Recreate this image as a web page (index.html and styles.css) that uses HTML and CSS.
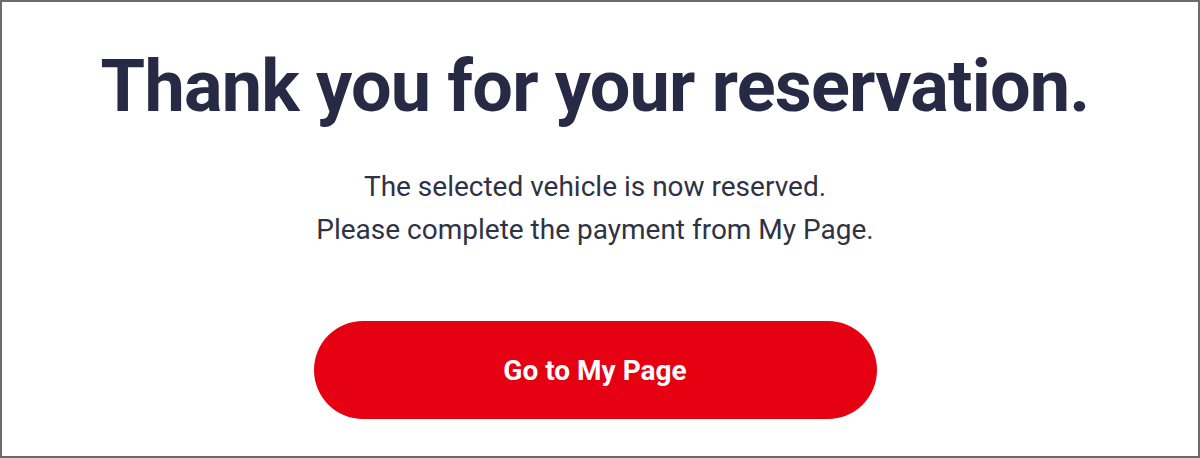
FILE: index.html
```html
<!DOCTYPE html>
<html>

<head>
  <title>Reservation Complete</title>
  <link rel="stylesheet" href="styles.css">
</head>

<body>

  <div class="frame">
    <h1 class="title">Thank you for your reservation.</h1>

    <div class="message">
      <p>The selected vehicle is now reserved.</p>
      <p>Please complete the payment from My Page.</p>
    </div>

    <div class="actions">
      <a class="btn-mypage" href="#">Go to My Page</a>
    </div>
  </div>

</body>

</html>
```

FILE: styles.css
```css
html, body { margin: 0; padding: 0; }
body { font-family: Roboto, "Liberation Sans", Arial, sans-serif; background: #fff; }

.frame {
  box-sizing: border-box;
  height: 458px;
  border: 2px solid #6b6b6b;
  padding: 42px 10px 0 0;
  display: flex;
  flex-direction: column;
  align-items: center;
}

.title {
  margin: 0;
  font-size: 72px;
  font-weight: 700;
  line-height: 86px;
  color: #272a44;
  letter-spacing: -0.8px;
}

.message {
  margin-top: 35px;
  text-align: center;
  color: #2f3245;
  font-size: 28px;
  line-height: 43px;
}
.message p { margin: 0; }

.actions { margin-top: 70px; }

.btn-mypage {
  display: flex;
  align-items: center;
  justify-content: center;
  width: 563px;
  height: 98px;
  border-radius: 49px;
  background: #e50012;
  color: #fff;
  font-size: 28px;
  font-weight: 700;
  text-decoration: none;
}
```
